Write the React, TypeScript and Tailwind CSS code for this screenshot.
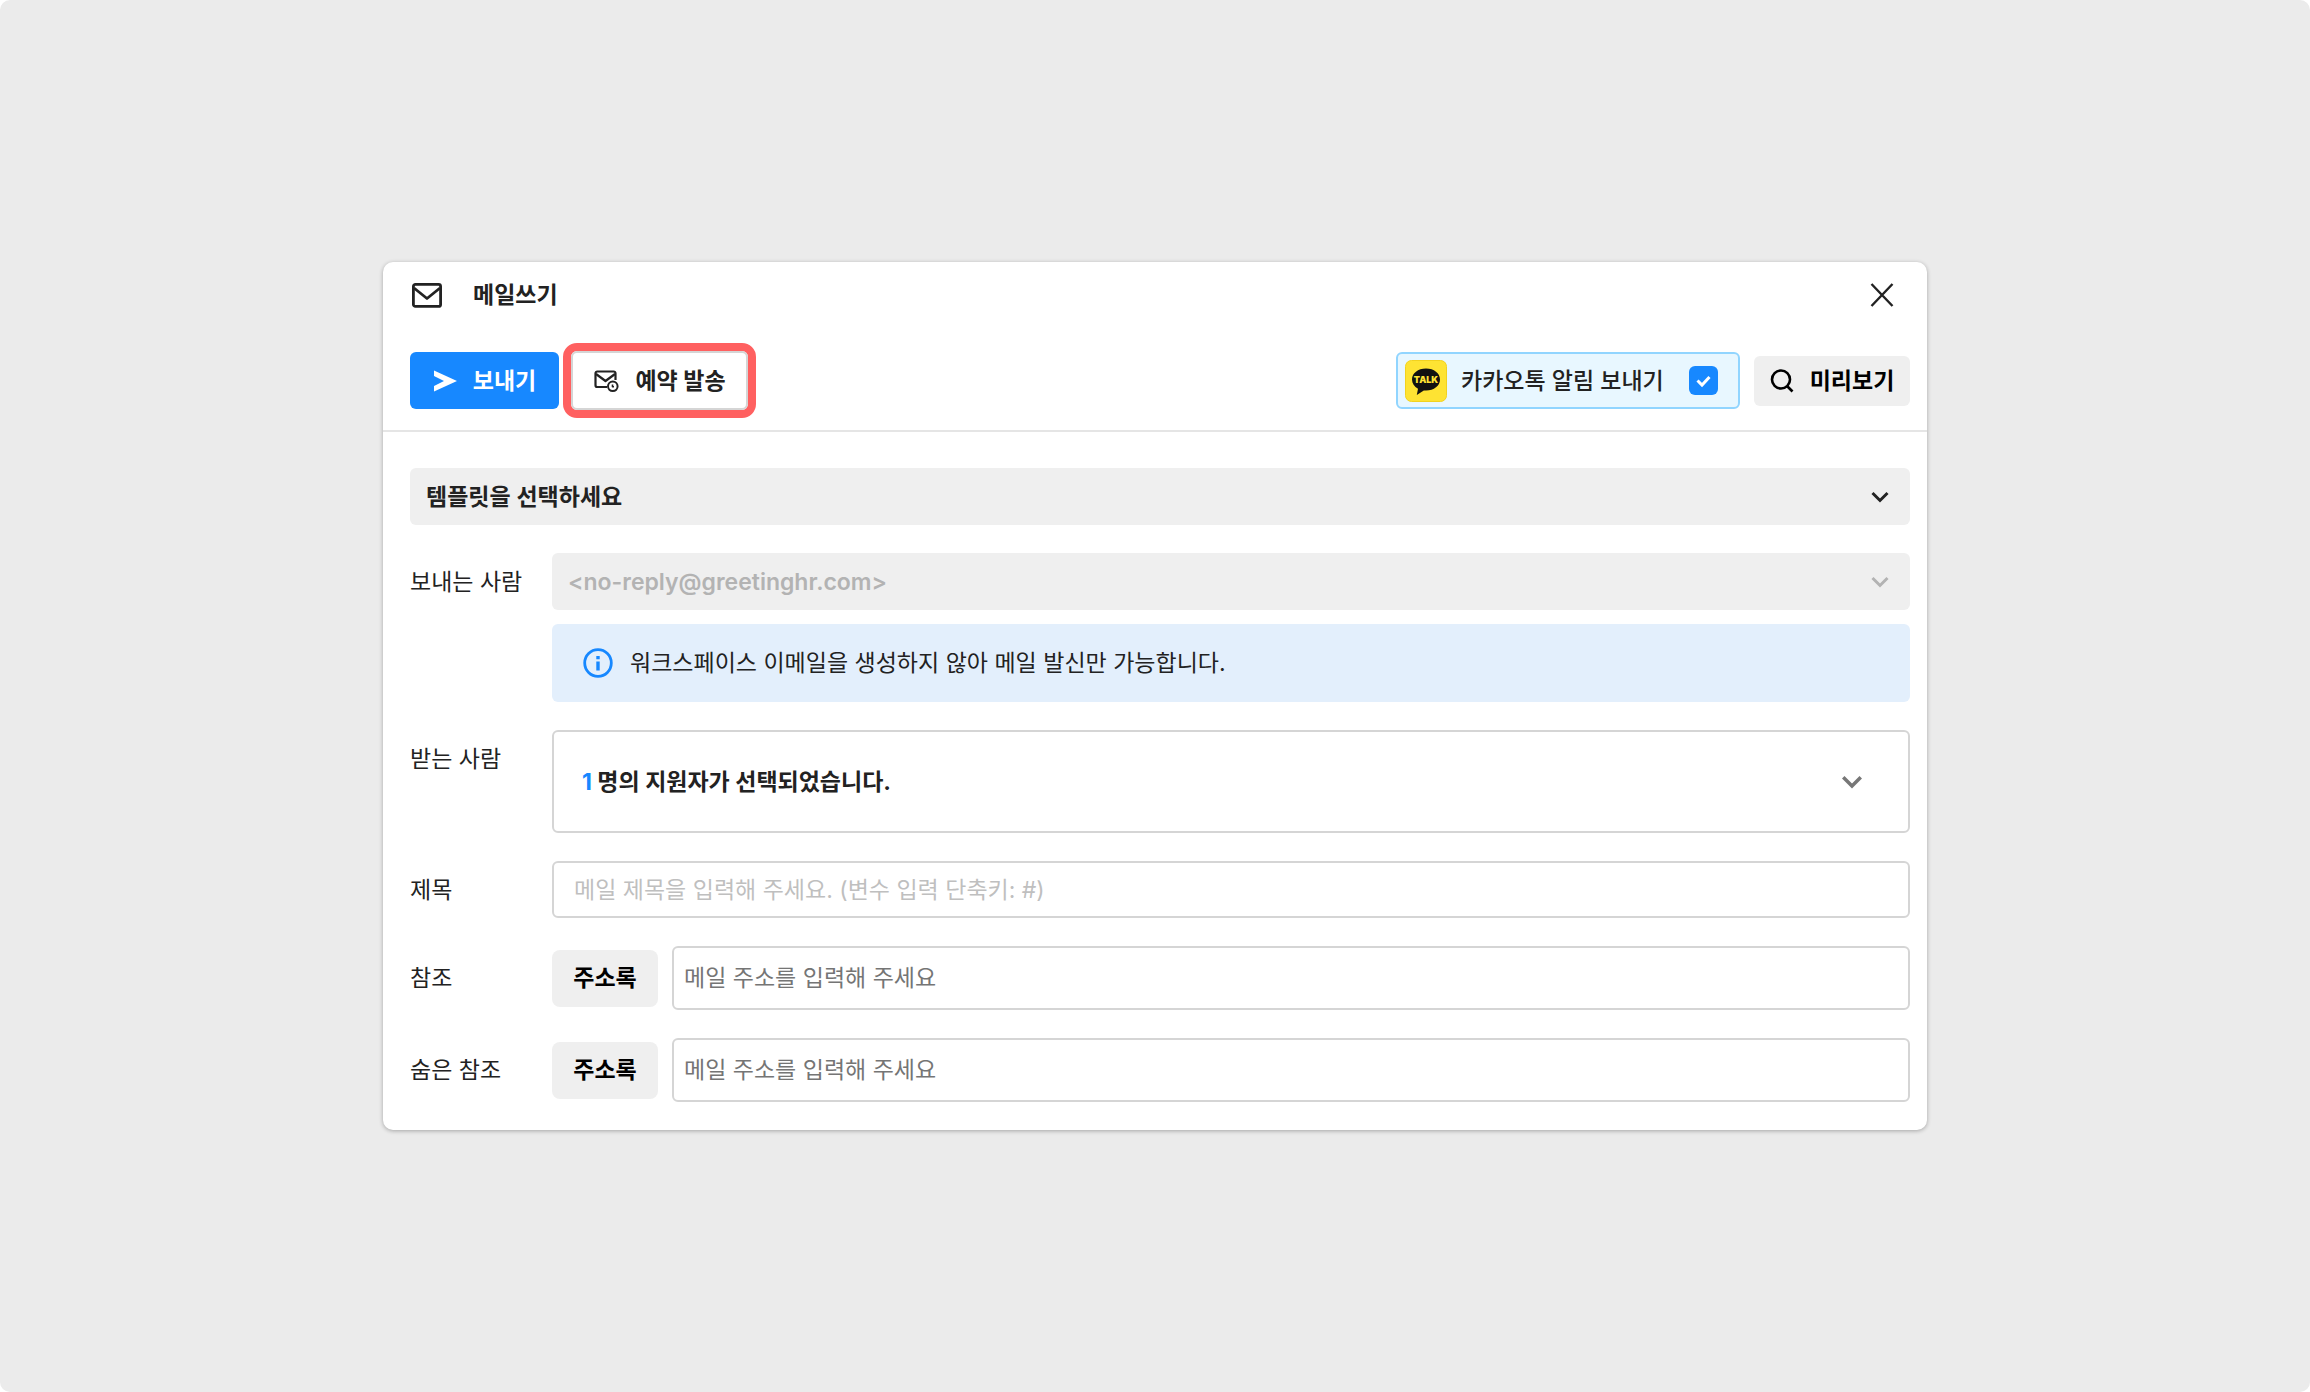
import { ComponentProps, ReactNode } from "react";
import clsx from "clsx";

const ChevronIcon = ({ className }: { className?: string }) => (
  <svg
    viewBox="0 0 24 24"
    fill="none"
    stroke="currentColor"
    strokeWidth="3"
    className={clsx("pointer-events-none", className)}
    aria-hidden="true"
  >
    <path d="m4.5 8 7.500 7.500L19.500 8" />
  </svg>
);

const MailIcon = () => (
  <svg
    viewBox="0 0 32 32"
    fill="none"
    stroke="currentColor"
    strokeWidth="2.8"
    strokeLinejoin="round"
    className="h-8 w-8"
    aria-hidden="true"
  >
    <rect x="2.4" y="5.4" width="27.2" height="22" rx="2" />
    <path d="m3 9 13 10.500L29 9" />
  </svg>
);

const MailClockIcon = () => (
  <svg
    viewBox="0 0 26 24"
    fill="none"
    stroke="currentColor"
    strokeWidth="2.2"
    strokeLinejoin="round"
    className="h-6 w-[26px]"
    aria-hidden="true"
  >
    <path d="M14 18H4.300a1.800 1.800 0 0 1-1.800-1.800V4.300a1.800 1.800 0 0 1 1.800-1.800h16.400a1.800 1.800 0 0 1 1.800 1.800V11" />
    <path d="m3 5 9.500 7L22 5" />
    <circle cx="19.800" cy="17.300" r="4.800" strokeWidth="2" />
    <path d="M19.500 15.500V17.800h1.500" strokeWidth="1.600" />
  </svg>
);

const SendIcon = () => (
  <svg viewBox="0 0 24 24" fill="currentColor" className="h-6 w-6" aria-hidden="true">
    <path d="M1 1.500 24 12 1 22.500v-5.500L11 12 1 7z" />
  </svg>
);

const SearchIcon = () => (
  <svg
    viewBox="0 0 24 24"
    fill="none"
    stroke="currentColor"
    strokeWidth="2.6"
    className="h-6 w-6"
    aria-hidden="true"
  >
    <circle cx="11" cy="10.500" r="9" />
    <path d="m17 17 5.500 5.500" />
  </svg>
);

const CloseIcon = () => (
  <svg
    viewBox="0 0 24 24"
    fill="none"
    stroke="currentColor"
    strokeWidth="2.400"
    className="h-6 w-6"
    aria-hidden="true"
  >
    <path d="M1.500 1l21 22M22.500 1l-21 22" />
  </svg>
);

const InfoIcon = () => (
  <svg
    viewBox="0 0 30 30"
    fill="none"
    stroke="currentColor"
    strokeWidth="2.800"
    className="h-[30px] w-[30px] shrink-0 text-[#1788ff]"
    aria-hidden="true"
  >
    <circle cx="15" cy="15" r="13.300" />
    <path d="M15 13.500v9M15 8v3.200" strokeWidth="3.400" />
  </svg>
);

const TalkIcon = () => (
  <svg viewBox="0 0 42 42" className="h-[42px] w-[42px] shrink-0" aria-hidden="true">
    <rect x="0.500" y="0.500" width="41" height="41" rx="6" fill="#fee333" stroke="#f2d21f" />
    <path
      d="M21 8.500c-8 0-14 4.700-14 11 0 4 2.300 7.200 6 9.300L11.800 35l7-4.600c.7.100 1.500.1 2.200.1 8 0 14-4.700 14-11s-6-11-14-11z"
      fill="#111"
    />
    <text
      x="21"
      y="23"
      fontSize="9"
      fontWeight="900"
      textAnchor="middle"
      fill="#fee333"
      className="font-['Inter',sans-serif]"
    >
      TALK
    </text>
  </svg>
);

const Select = ({ className, children, ...props }: ComponentProps<"select">) => (
  <div className="grid items-center">
    <select
      className="col-start-1 row-start-1 h-[57px] w-full appearance-none rounded-md bg-[#efefef] px-4 font-semibold text-[#222] disabled:text-[#b3b3b3] disabled:opacity-100"
      {...props}
    >
      {children}
    </select>
    <ChevronIcon
      className={clsx("col-start-1 row-start-1 mr-[18px] h-6 w-6 justify-self-end", className)}
    />
  </div>
);

interface IFieldProps {
  label: string;
  htmlFor: string;
  children: ReactNode;
}

const Field = ({ label, htmlFor, children }: IFieldProps) => (
  <div className="flex items-start">
    <label htmlFor={htmlFor} className="flex h-[57px] w-[142px] shrink-0 items-center">
      {label}
    </label>
    <div className="flex min-w-0 grow flex-col gap-[14px]">{children}</div>
  </div>
);

const AddressField = ({ label, id }: { label: string; id: string }) => (
  <div className="flex items-center">
    <label htmlFor={id} className="w-[142px] shrink-0">
      {label}
    </label>
    <button
      type="button"
      className="h-[57px] w-[106px] shrink-0 rounded-lg bg-[#efefef] font-bold text-black"
    >
      주소록
    </button>
    <input
      id={id}
      type="text"
      placeholder="메일 주소를 입력해 주세요"
      className="ml-[14px] h-16 min-w-0 grow rounded-md border-2 border-[#d5d5d5] px-[10px] placeholder:text-[#757575]"
    />
  </div>
);

const App = () => {
  return (
    <div className="bg-white">
      <main className="flex min-h-screen items-center justify-center rounded-[10px] bg-[#ebebeb] px-6 font-['Inter','Noto_Sans_CJK_KR',sans-serif] text-[23px] leading-8 text-[#222]">
        <form className="w-full max-w-[1544px] rounded-[10px] bg-white shadow-[0_1px_4px_rgba(0,0,0,0.3)]">
          <header className="flex items-center px-7 pt-[17px]">
            <MailIcon />
            <h1 className="ml-[30px] font-bold">메일쓰기</h1>
            <button type="button" aria-label="닫기" className="mr-[5px] ml-auto">
              <CloseIcon />
            </button>
          </header>

          <div className="flex items-center border-b-2 border-[#e5e5e5] pt-8 pr-[17px] pb-3 pl-[27px]">
            <button
              type="submit"
              className="flex h-[57px] w-[149px] items-center justify-center gap-4 rounded-md bg-[#1788ff] font-bold text-white"
            >
              <SendIcon />
              보내기
            </button>
            <div className="ml-1 rounded-[14px] border-8 border-[#ff6060]">
              <button
                type="button"
                className="flex h-[59px] w-[177px] items-center justify-center gap-4 rounded-md border-2 border-[#d5d5d5] font-bold"
              >
                <MailClockIcon />
                예약 발송
              </button>
            </div>

            <label className="ml-auto flex h-[57px] w-[344px] items-center justify-between rounded-md border-2 border-[#91d5ff] bg-[#e8f7ff] pr-5 pl-[7px] font-medium">
              <span className="flex items-center gap-[14px]">
                <TalkIcon />
                카카오톡 알림 보내기
              </span>
              <span className="grid">
                <input
                  type="checkbox"
                  defaultChecked
                  className="col-start-1 row-start-1 h-[29px] w-[29px] appearance-none rounded-md bg-[#1788ff]"
                />
                <svg
                  viewBox="0 0 29 29"
                  fill="none"
                  stroke="white"
                  strokeWidth="3"
                  className="pointer-events-none col-start-1 row-start-1 h-[29px] w-[29px]"
                  aria-hidden="true"
                >
                  <path d="m8.500 14.500 4.500 4.500 7.500-8" />
                </svg>
              </span>
            </label>
            <button
              type="button"
              className="ml-[14px] flex h-[50px] w-[156px] items-center justify-center gap-4 rounded-md bg-[#efefef] font-bold text-black"
            >
              <SearchIcon />
              미리보기
            </button>
          </div>

          <div className="flex flex-col gap-7 pt-9 pr-[17px] pb-7 pl-[27px]">
            <Select aria-label="템플릿">
              <option>템플릿을 선택하세요</option>
            </Select>

            <Field label="보내는 사람" htmlFor="sender">
              <Select id="sender" disabled className="text-[#b3b3b3]">
                <option>&lt;no-reply@greetinghr.com&gt;</option>
              </Select>
              <p className="flex h-[78px] items-center gap-[17px] rounded-md bg-[#e3effc] px-[31px]">
                <InfoIcon />
                워크스페이스 이메일을 생성하지 않아 메일 발신만 가능합니다.
              </p>
            </Field>

            <Field label="받는 사람" htmlFor="recipients">
              <button
                id="recipients"
                type="button"
                className="flex h-[103px] items-center justify-between rounded-md border-2 border-[#d5d5d5] pr-[42px] pl-7 font-bold"
              >
                <span>
                  <span className="text-[#1788ff]">1</span> 명의 지원자가 선택되었습니다.
                </span>
                <ChevronIcon className="h-7 w-7 text-[#777]" />
              </button>
            </Field>

            <Field label="제목" htmlFor="subject">
              <input
                id="subject"
                type="text"
                placeholder="메일 제목을 입력해 주세요. (변수 입력 단축키: #)"
                className="h-[57px] rounded-md border-2 border-[#d5d5d5] px-5 placeholder:text-[#bfbfbf]"
              />
            </Field>

            <AddressField label="참조" id="cc" />
            <AddressField label="숨은 참조" id="bcc" />
          </div>
        </form>
      </main>
    </div>
  );
};

export default App;
